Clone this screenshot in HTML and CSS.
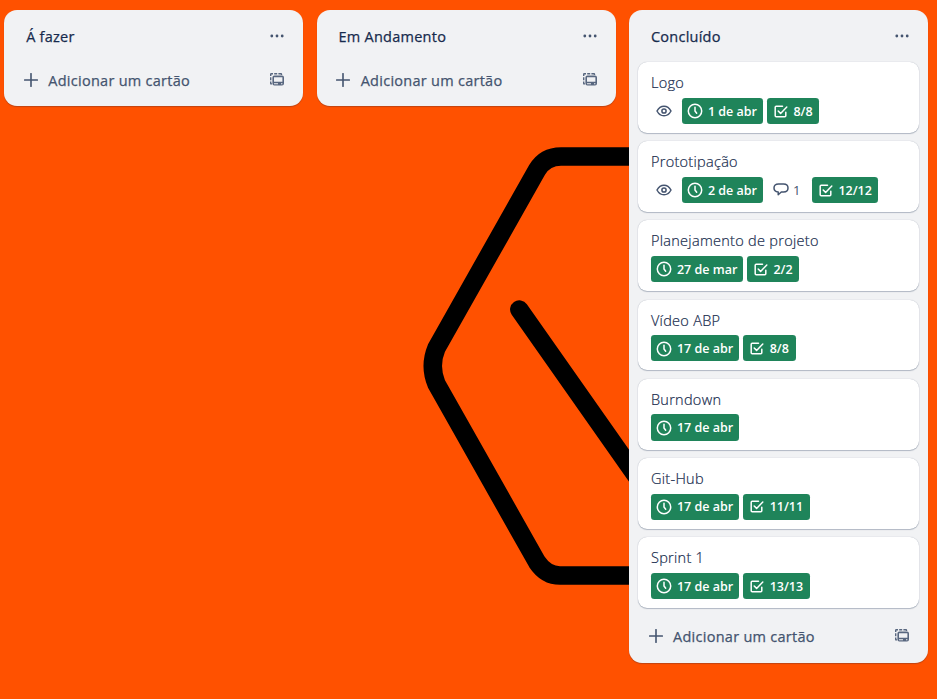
FILE: index.html
```html
<!DOCTYPE html>
<html lang="pt-BR">
<head>
<meta charset="utf-8">
<title>Quadro</title>
<link rel="stylesheet" href="styles.css">
</head>
<body>
<svg class="defs" aria-hidden="true">
  <symbol id="dots" viewBox="0 0 14 4"><circle cx="1.8" cy="2" r="1.4"/><circle cx="7" cy="2" r="1.4"/><circle cx="12.2" cy="2" r="1.4"/></symbol>
  <symbol id="plus" viewBox="0 0 14 14"><path d="M7 .7v12.6M.7 7h12.6" fill="none" stroke="currentColor" stroke-width="1.6" stroke-linecap="round"/></symbol>
  <symbol id="template" viewBox="0 0 14 13"><path d="M0 3V1.2Q0 0 1.2 0H3v1.4H1.4V3zM4.2 0h3v1.4h-3zM8.4 0H11q1.2 0 1.2 1.2V2h-1.4v-.6H8.4zM0 4.2h1.4v3H0zM0 8.4h1.4v1.8H2v1.4h-.8Q0 11.600 0 10.400z"/><path fill-rule="evenodd" d="M4.400 2.600H12Q14 2.600 14 4.600v6q0 2-2 2H4.400q-2 0-2-2v-6q0-2 2-2zM4 4.300v4.500h8.400V4.300zM4 10.200v1h4v-1zM11 10.200v1h1.400v-1z"/></symbol>
  <symbol id="eye" viewBox="0 0 16 12"><path d="M1 6C2.600 3 4.900 1.200 8 1.200S13.400 3 15 6c-1.600 3-3.900 4.800-7 4.800S2.600 9 1 6z" fill="none" stroke="currentColor" stroke-width="1.500" stroke-linejoin="round"/><circle cx="8" cy="6" r="2.100" fill="none" stroke="currentColor" stroke-width="1.500"/></symbol>
  <symbol id="clock" viewBox="0 0 16 16"><circle cx="8" cy="8" r="6.700" fill="none" stroke="currentColor" stroke-width="1.500"/><path d="M8 4.200V8l1.700 2.200" fill="none" stroke="currentColor" stroke-width="1.500" stroke-linecap="round" stroke-linejoin="round"/></symbol>
  <symbol id="check" viewBox="0 0 14 13"><path d="M8.500 1.200H2.200Q1.200 1.200 1.200 2.200v8.600q0 1 1 1h8.600q1 0 1-1V7.200M4.200 6l2.400 2.400L12.800 2" fill="none" stroke="currentColor" stroke-width="1.500" stroke-linecap="round" stroke-linejoin="round"/></symbol>
  <symbol id="comment" viewBox="0 0 16 13"><path d="M5.200 9v2.700L8.300 9h2.200C13.400 9 15 7.500 15 5s-1.600-4-4.500-4h-5C2.600 1 1 2.500 1 5c0 2.200 1.400 3.700 4.200 4z" fill="none" stroke="currentColor" stroke-width="1.500" stroke-linejoin="round"/></symbol>
</svg>
<svg class="wallpaper" viewBox="0 0 937 699" aria-hidden="true"><path d="M640 156.500H561Q545 156.500 537 170L436.500 348Q429 366 436.500 384L537 562Q546 575.500 560 575.500H640M519.300 309.500L650 495.500"/></svg>

<main class="board">
  <section class="list">
    <header class="list-header"><h2>Á fazer</h2><svg class="dots"><use href="#dots"/></svg></header>
    <footer class="add-card"><svg class="plus"><use href="#plus"/></svg><span>Adicionar um cartão</span><svg class="template"><use href="#template"/></svg></footer>
  </section>
  <section class="list">
    <header class="list-header"><h2>Em Andamento</h2><svg class="dots"><use href="#dots"/></svg></header>
    <footer class="add-card"><svg class="plus"><use href="#plus"/></svg><span>Adicionar um cartão</span><svg class="template"><use href="#template"/></svg></footer>
  </section>
  <section class="list">
    <header class="list-header"><h2>Concluído</h2><svg class="dots"><use href="#dots"/></svg></header>
    <div class="cards">
      <article class="card"><h3>Logo</h3><div class="badges">
        <span class="watch"><svg class="eye"><use href="#eye"/></svg></span>
        <span class="badge date short"><svg class="clock"><use href="#clock"/></svg>1 de abr</span>
        <span class="badge tasks"><svg class="check"><use href="#check"/></svg>8/8</span></div></article>
      <article class="card"><h3>Prototipação</h3><div class="badges">
        <span class="watch"><svg class="eye"><use href="#eye"/></svg></span>
        <span class="badge date short"><svg class="clock"><use href="#clock"/></svg>2 de abr</span>
        <span class="comments"><svg class="comment"><use href="#comment"/></svg>1</span>
        <span class="badge tasks wide"><svg class="check"><use href="#check"/></svg>12/12</span></div></article>
      <article class="card"><h3>Planejamento de projeto</h3><div class="badges">
        <span class="badge date long"><svg class="clock"><use href="#clock"/></svg>27 de mar</span>
        <span class="badge tasks"><svg class="check"><use href="#check"/></svg>2/2</span></div></article>
      <article class="card"><h3>Vídeo ABP</h3><div class="badges">
        <span class="badge date"><svg class="clock"><use href="#clock"/></svg>17 de abr</span>
        <span class="badge tasks"><svg class="check"><use href="#check"/></svg>8/8</span></div></article>
      <article class="card"><h3>Burndown</h3><div class="badges">
        <span class="badge date"><svg class="clock"><use href="#clock"/></svg>17 de abr</span></div></article>
      <article class="card"><h3>Git-Hub</h3><div class="badges">
        <span class="badge date"><svg class="clock"><use href="#clock"/></svg>17 de abr</span>
        <span class="badge tasks wide"><svg class="check"><use href="#check"/></svg>11/11</span></div></article>
      <article class="card"><h3>Sprint 1</h3><div class="badges">
        <span class="badge date"><svg class="clock"><use href="#clock"/></svg>17 de abr</span>
        <span class="badge tasks wide"><svg class="check"><use href="#check"/></svg>13/13</span></div></article>
    </div>
    <footer class="add-card"><svg class="plus"><use href="#plus"/></svg><span>Adicionar um cartão</span><svg class="template"><use href="#template"/></svg></footer>
  </section>
</main>
</body>
</html>
```
FILE: styles.css
```css
* { box-sizing: border-box; }
body {
  margin: 0;
  height: 699px;
  overflow: hidden;
  background: #ff5100;
  color: #172b4d;
  font-family: "Open Sans", "Noto Sans", sans-serif;
}
svg { display: block; flex: none; fill: currentColor; }
h2, h3 { margin: 0; }
.defs { position: absolute; width: 0; height: 0; }
.wallpaper { position: absolute; inset: 0; width: 937px; height: 699px; }
.wallpaper path { fill: none; stroke: #000; stroke-width: 18.5px; stroke-linecap: round; }

.board {
  position: relative;
  display: flex;
  align-items: flex-start;
  gap: 13.2px;
  padding: 10px 0 0 4.2px;
}
.list {
  flex: none;
  width: 299.2px;
  padding-bottom: 8.4px;
  border-radius: 13px;
  background: #f1f2f4;
  box-shadow: 0 1px 1px #091e4240;
}
.list-header {
  display: flex;
  justify-content: space-between;
  height: 52px;
  padding: 16px 19px 0 22px;
}
.list-header h2 {
  font-size: 14.5px;
  line-height: 22px;
  font-weight: 500;
  letter-spacing: .25px;
  -webkit-text-stroke: .25px currentColor;
}
.dots { width: 14px; height: 4px; margin-top: 8px; color: #44546f; }

.add-card {
  display: flex;
  align-items: center;
  height: 36px;
  padding: 0 19px 0 19.8px;
  color: #44546f;
  font-size: 14.5px;
  font-weight: 500;
  letter-spacing: .27px;
}
.add-card span { -webkit-text-stroke: .25px currentColor; }
.plus { width: 14px; height: 14px; margin-right: 10.3px; margin-bottom: .6px; }
.template { width: 14px; height: 13px; margin: 0 0 1.6px auto; opacity: .88; }

.cards {
  display: flex;
  flex-direction: column;
  gap: 8.4px;
  padding: 0 9px;
  margin-bottom: 10.2px;
}
.card {
  height: 70.8px;
  padding: 9px 13px 0;
  border-radius: 9px;
  background: #fff;
  box-shadow: 0 1px 1px #091e4240, 0 0 1px #091e424f;
}
.card h3 {
  height: 26.7px;
  font-size: 14.5px;
  line-height: 24px;
  font-weight: 300;
  letter-spacing: .29px;
  -webkit-text-stroke: .2px currentColor;
}
.badges { display: flex; gap: 4px; white-space: nowrap; }
.badge {
  display: flex;
  align-items: center;
  height: 26.2px;
  padding-top: .5px;
  border-radius: 3.3px;
  background: #1f845a;
  color: #fff;
  font-size: 12.5px;
  font-weight: 600;
}
.date { width: 88.2px; padding-left: 5px; }
.date.short { width: 81px; }
.date.long { width: 92px; }
.tasks { width: 52.4px; padding-left: 7px; }
.tasks.wide { width: 66.4px; }
.watch { display: flex; align-items: center; width: 27px; height: 26px; padding-left: 5px; color: #44546f; }
.eye { width: 16px; height: 12px; }
.clock { width: 16px; height: 16px; margin-right: 5px; }
.check { width: 14px; height: 13px; margin-right: 5.5px; }
.comments {
  display: flex;
  align-items: center;
  width: 41px;
  height: 26px;
  padding-left: 6px;
  color: #44546f;
  font-size: 13px;
}
.comment { width: 16px; height: 13px; margin-right: 4px; }
```
